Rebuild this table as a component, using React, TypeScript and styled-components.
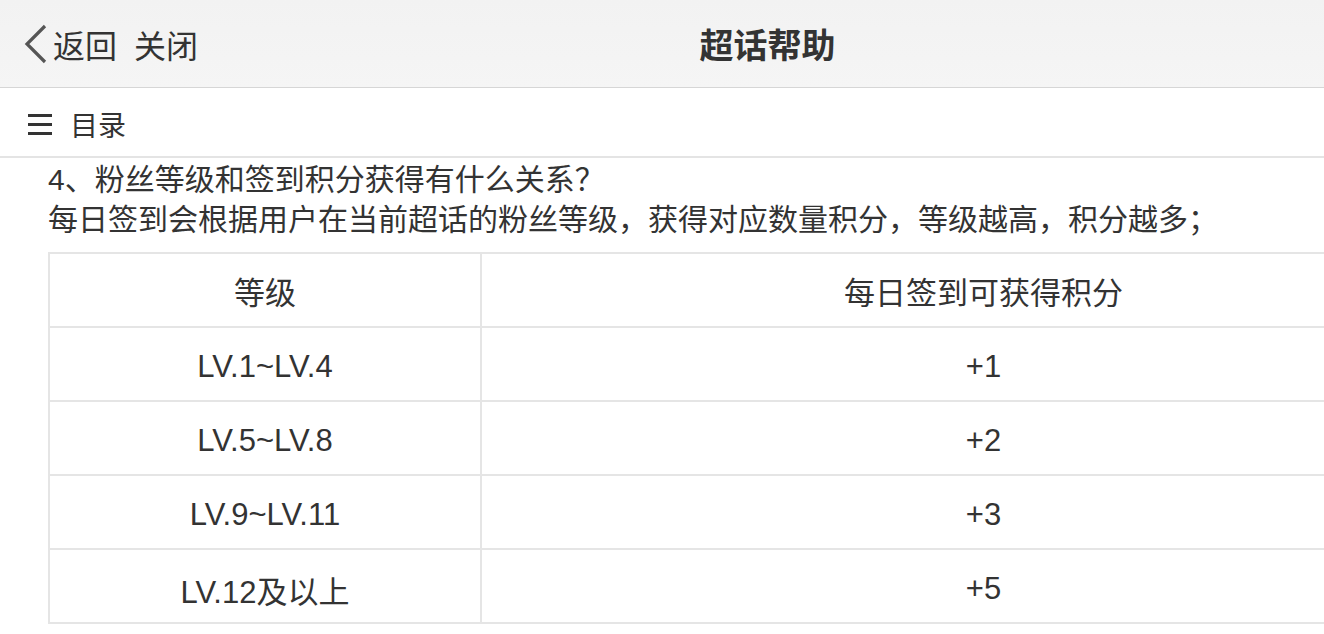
import { createGlobalStyle } from "styled-components";
import styled from "styled-components";

const GlobalStyle = createGlobalStyle`
  html, body {
    margin: 0;
    padding: 0;
    background: #ffffff;
    overflow: hidden;
  }
  body {
    font-family: "Liberation Sans", "Noto Sans CJK SC", sans-serif;
    color: #333333;
  }
`;

const rows = [
  { level: "LV.1~LV.4", score: "+1" },
  { level: "LV.5~LV.8", score: "+2" },
  { level: "LV.9~LV.11", score: "+3" },
  { level: "LV.12及以上", score: "+5" },
];

export default function App() {
  return (
    <>
      <GlobalStyle />
      <Page>
        <NavBar>
          <NavLeft>
            <BackButton>
              <svg width="24" height="40" viewBox="0 0 24 40">
                <polyline
                  points="21,2 3,20 21,38"
                  fill="none"
                  stroke="#555"
                  strokeWidth="3.2"
                />
              </svg>
              <span>返回</span>
            </BackButton>
            <NavLink>关闭</NavLink>
          </NavLeft>
          <NavTitle>超话帮助</NavTitle>
        </NavBar>

        <MenuRow>
          <MenuIcon>
            <i />
            <i />
            <i />
          </MenuIcon>
          <MenuLabel>目录</MenuLabel>
        </MenuRow>

        <Content>
          <Paragraph>4、粉丝等级和签到积分获得有什么关系？</Paragraph>
          <Paragraph>
            每日签到会根据用户在当前超话的粉丝等级，获得对应数量积分，等级越高，积分越多；
          </Paragraph>

          <Table>
            <thead>
              <tr>
                <Cell as="th" $first>等级</Cell>
                <Cell as="th">每日签到可获得积分</Cell>
              </tr>
            </thead>
            <tbody>
              {rows.map((r) => (
                <tr key={r.level}>
                  <Cell $first $body>{r.level}</Cell>
                  <Cell $body>{r.score}</Cell>
                </tr>
              ))}
            </tbody>
          </Table>
        </Content>
      </Page>
    </>
  );
}

const Page = styled.div`
  width: 1535px;
`;

const NavBar = styled.header`
  position: relative;
  height: 87px;
  display: flex;
  align-items: center;
  justify-content: center;
  background: linear-gradient(180deg, #f2f2f2 0%, #f5f5f5 100%);
  border-bottom: 1px solid #d6d6d6;
`;

const NavLeft = styled.div`
  position: absolute;
  left: 24px;
  top: 0;
  bottom: 0;
  display: flex;
  align-items: center;
  gap: 17px;
`;

const BackButton = styled.div`
  display: flex;
  align-items: center;
  gap: 5px;
  font-family: "Noto Sans CJK SC", sans-serif;
  font-size: 32px;
  color: #333;

  svg {
    display: block;
  }
`;

const NavLink = styled.span`
  font-family: "Noto Sans CJK SC", sans-serif;
  font-size: 32px;
  color: #333;
`;

const NavTitle = styled.h1`
  margin: 0;
  font-family: "Noto Sans CJK SC", sans-serif;
  font-size: 34px;
  font-weight: 700;
  color: #333;
`;

const MenuRow = styled.div`
  height: 70px;
  padding: 4px 0 0 28px;
  box-sizing: border-box;
  display: flex;
  align-items: center;
  gap: 18px;
  border-bottom: 2px solid #e4e4e4;
`;

const MenuIcon = styled.div`
  width: 24px;
  display: flex;
  flex-direction: column;
  gap: 6px;

  i {
    display: block;
    height: 3px;
    background: #333;
  }
`;

const MenuLabel = styled.span`
  font-family: "Noto Sans CJK SC", sans-serif;
  font-size: 28px;
  color: #333;
`;

const Content = styled.main`
  padding: 2px 48px 0 48px;
`;

const Paragraph = styled.p`
  margin: 0;
  font-size: 30px;
  line-height: 40px;
  color: #333;
  white-space: nowrap;
`;

const Table = styled.table`
  margin-top: 12px;
  width: 100%;
  border-collapse: collapse;
  table-layout: fixed;
`;

const Cell = styled.td<{ $first?: boolean; $body?: boolean }>`
  width: ${(p) => (p.$first ? "430px" : "auto")};
  height: ${(p) => (p.$body ? "66px" : "72px")};
  padding: ${(p) => (p.$body ? "6px 0 0" : "0")};
  border: 2px solid #e5e5e5;
  text-align: center;
  vertical-align: middle;
  font-size: 31px;
  font-weight: 400;
  color: #333;
`;
